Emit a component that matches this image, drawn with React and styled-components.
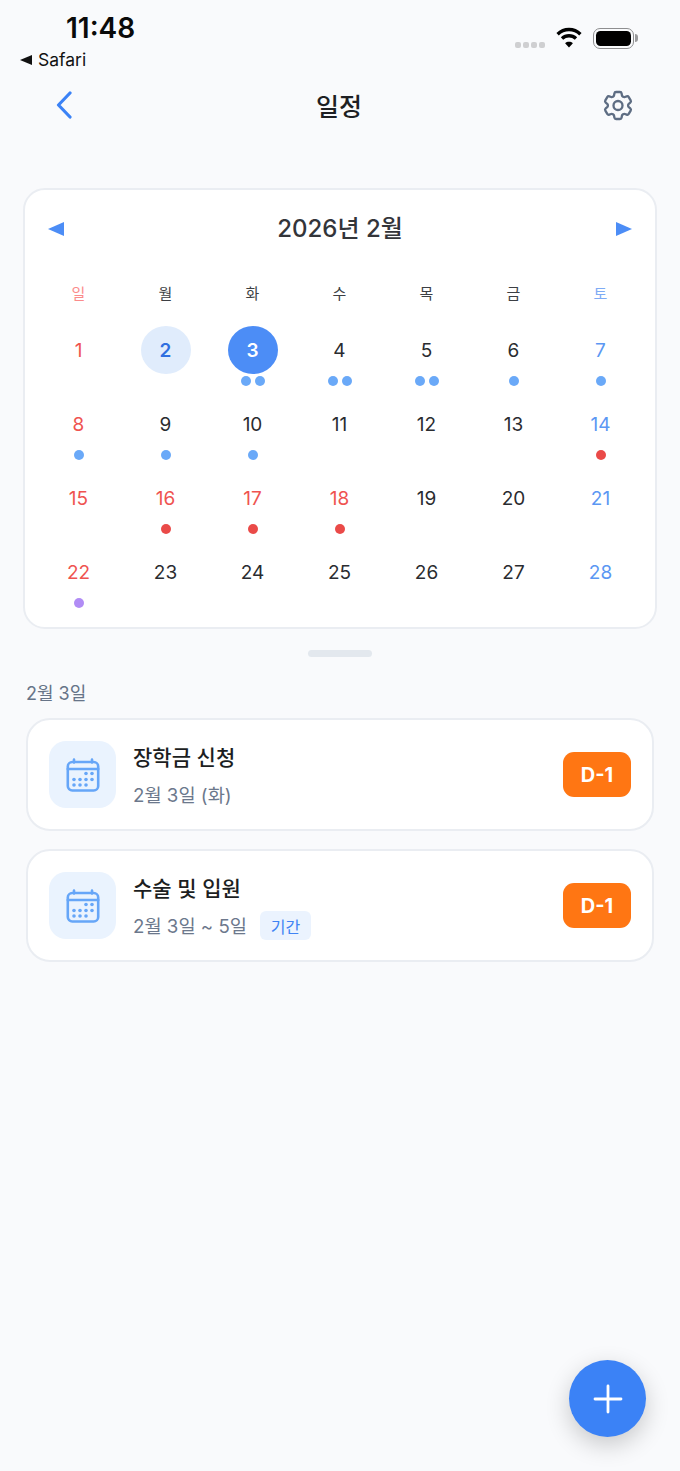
import React from "react";
import styled, { createGlobalStyle } from "styled-components";

const Global = createGlobalStyle`
  html, body { margin: 0; padding: 0; background: #f9fafc; }
  body { font-family: Inter, "Noto Sans CJK KR", "Noto Sans", sans-serif; color: #1f2024; }
  * { box-sizing: border-box; }
`;

const Page = styled.div`
  position: relative;
  width: 680px;
  height: 1471px;
  overflow: hidden;
  background: #f9fafc;
  display: flex;
  flex-direction: column;
`;

const StatusBar = styled.div`
  height: 80px;
  display: flex;
  justify-content: space-between;
  padding: 12px 46px 0 20px;
`;
const StatusLeft = styled.div`
  display: flex;
  flex-direction: column;
`;
const Time = styled.div`
  margin-left: 46px;
  font-size: 28px;
  line-height: 32px;
  font-weight: 600;
  color: #0a0a0a;
`;
const BackToSafari = styled.div`
  display: flex;
  align-items: center;
  gap: 6px;
  margin-top: 6px;
  font-size: 17.5px;
  line-height: 20px;
  color: #111;
`;
const SmallTriangle = styled.span`
  width: 0;
  height: 0;
  border-top: 5.5px solid transparent;
  border-bottom: 5.5px solid transparent;
  border-right: 12px solid #111;
`;
const StatusRight = styled.div`
  display: flex;
  align-items: flex-start;
  padding-top: 15px;
`;
const SignalDots = styled.div`
  display: flex;
  gap: 2px;
  margin: 15px 11px 0 0;
`;
const SignalDot = styled.span`
  width: 6px;
  height: 6px;
  border-radius: 2px;
  background: #cfcfd1;
`;
const Battery = styled.div`
  position: relative;
  width: 41px;
  height: 21px;
  margin: 1px 0 0 11px;
  padding: 2px;
  border: 1.5px solid #8e8e90;
  border-radius: 7px;
`;
const BatteryFill = styled.div`
  height: 100%;
  background: #000;
  border-radius: 4.5px;
`;
const BatteryCap = styled.span`
  position: absolute;
  right: -5px;
  top: 5px;
  width: 3px;
  height: 8px;
  border-radius: 0 3px 3px 0;
  background: #9a9a9c;
`;

const Header = styled.header`
  height: 50px;
  display: flex;
  align-items: center;
  justify-content: space-between;
  padding: 0 44px 0 52px;
`;
const HeaderTitle = styled.h1`
  margin: 0 0 0 2px;
  font-size: 25px;
  font-weight: 500;
  color: #1d1f23;
`;
const IconButton = styled.div`
  display: flex;
  width: ${(p) => p.$w}px;
  justify-content: center;
`;

const CalendarCard = styled.section`
  margin: 58px 23px 0;
  height: 441px;
  padding: 0 10px;
  background: #fff;
  border: 2px solid #eaedf2;
  border-radius: 22px;
`;
const MonthBar = styled.div`
  height: 78px;
  display: flex;
  align-items: center;
  justify-content: space-between;
  padding: 0 13px;
`;
const MonthTitle = styled.div`
  font-size: 24px;
  line-height: 32px;
  font-weight: 500;
  color: #33353a;
`;
const Arrow = styled.span`
  width: 0;
  height: 0;
  border-top: 7.5px solid transparent;
  border-bottom: 7.5px solid transparent;
  ${(p) => (p.$right ? "border-left" : "border-right")}: 16px solid #4c8df6;
`;
const WeekRow = styled.div`
  display: grid;
  grid-template-columns: repeat(7, 87px);
  height: 56px;
  align-items: center;
  margin-top: -4px;
`;
const WeekDay = styled.div`
  text-align: center;
  font-size: 15px;
  color: ${(p) => p.$color};
`;
const DayGrid = styled.div`
  display: grid;
  grid-template-columns: repeat(7, 87px);
  grid-auto-rows: 74px;
  margin-top: 6px;
`;
const DayCell = styled.div`
  display: flex;
  flex-direction: column;
  align-items: center;
`;
const DayNumber = styled.div`
  width: 50px;
  height: 48px;
  border-radius: 50%;
  display: flex;
  align-items: center;
  justify-content: center;
  font-size: 19px;
  font-weight: ${(p) => (p.$state ? 600 : 400)};
  background: ${(p) => (p.$state === "selected" ? "#4c8df6" : p.$state === "today" ? "#e0ecfc" : "transparent")};
  color: ${(p) => p.$color};
`;
const Dots = styled.div`
  display: flex;
  gap: 4px;
  margin-top: 2px;
`;
const Dot = styled.span`
  width: 10px;
  height: 10px;
  border-radius: 50%;
  background: ${(p) => p.$color};
`;

const Handle = styled.div`
  width: 64px;
  height: 7px;
  border-radius: 4px;
  margin: 21px auto 0;
  background: #e3e8ee;
`;
const DateLabel = styled.div`
  margin: 25px 26px 0;
  font-size: 18px;
  line-height: 24px;
  font-weight: 400;
  color: #677488;
`;
const EventList = styled.div`
  display: flex;
  flex-direction: column;
  gap: 18px;
  margin: 12px 26px 0;
`;
const EventCard = styled.article`
  height: 113px;
  display: flex;
  align-items: center;
  padding: 0 21px;
  background: #fff;
  border: 2px solid #eaedf2;
  border-radius: 24px;
`;
const EventIcon = styled.div`
  width: 67px;
  height: 67px;
  flex: none;
  display: flex;
  align-items: center;
  justify-content: center;
  border-radius: 17px;
  background: #eaf3fe;
`;
const EventBody = styled.div`
  flex: 1;
  margin-left: 17px;
  padding-top: 2px;
`;
const EventTitle = styled.div`
  font-size: 21px;
  line-height: 30px;
  font-weight: 500;
  color: #1c1e22;
`;
const EventMeta = styled.div`
  display: flex;
  align-items: center;
  gap: 13px;
  margin-top: 6px;
  height: 30px;
  font-size: 18.7px;
  color: #6c788c;
`;
const Tag = styled.span`
  width: 51px;
  height: 29px;
  display: flex;
  align-items: center;
  justify-content: center;
  margin-top: 2px;
  border-radius: 6px;
  background: #ebf3fe;
  color: #3f83f4;
  font-size: 16px;
`;
const DBadge = styled.div`
  width: 68px;
  height: 45px;
  display: flex;
  align-items: center;
  justify-content: center;
  border-radius: 11px;
  background: #ff7613;
  color: #fff;
  font-size: 20px;
  font-weight: 700;
`;
const Fab = styled.button`
  position: absolute;
  left: 569px;
  top: 1360px;
  width: 77px;
  height: 77px;
  padding: 0;
  border: 0;
  border-radius: 50%;
  display: flex;
  align-items: center;
  justify-content: center;
  background: #3b82f6;
  box-shadow: 0 8px 24px rgba(0, 0, 0, 0.2);
`;

const RED = "#ef5350";
const BLUE = "#5b97f3";
const INK = "#2a2c30";
const DOT_BLUE = "#6aa9f8";
const DOT_RED = "#ea4a48";
const DOT_PURPLE = "#b18cf5";

const week = [
  ["일", "#fb8b8b"],
  ["월", "#3c3f44"],
  ["화", "#3c3f44"],
  ["수", "#3c3f44"],
  ["목", "#3c3f44"],
  ["금", "#3c3f44"],
  ["토", "#7eabf5"],
];

const dayDots = {
  3: [DOT_BLUE, DOT_BLUE],
  4: [DOT_BLUE, DOT_BLUE],
  5: [DOT_BLUE, DOT_BLUE],
  6: [DOT_BLUE],
  7: [DOT_BLUE],
  8: [DOT_BLUE],
  9: [DOT_BLUE],
  10: [DOT_BLUE],
  14: [DOT_RED],
  16: [DOT_RED],
  17: [DOT_RED],
  18: [DOT_RED],
  22: [DOT_PURPLE],
};
const redDays = new Set([1, 8, 15, 16, 17, 18, 22]);

function dayColor(d) {
  if (d === 3) return "#fff";
  if (d === 2) return "#2f6fe0";
  if (redDays.has(d)) return RED;
  if (d % 7 === 0) return BLUE;
  return INK;
}

const CalendarIcon = () => (
  <svg width="34" height="34" viewBox="0 0 34 34" fill="none" stroke="#66a6f8" strokeWidth="2.6" strokeLinecap="round">
    <rect x="1.8" y="4" width="30.4" height="28.5" rx="4.5" />
    <path d="M1.8 11h30.4M8 1.5v3M26 1.5v3" />
    <g fill="#66a6f8" stroke="none">
      {[[20, 15.5], [26, 15.5], [8, 21.5], [14, 21.5], [20, 21.5], [26, 21.5], [8, 27], [14, 27], [20, 27]].map(([x, y]) => (
        <circle key={`${x}-${y}`} cx={x} cy={y} r="1.8" />
      ))}
    </g>
  </svg>
);

const Wifi = () => (
  <svg width="26" height="21" viewBox="0 0 26 21" fill="none" stroke="#000" strokeWidth="3.4" strokeLinecap="butt">
    <path d="M1.6 7.2C8 1 18 1 24.4 7.2" />
    <path d="M6 11.6c4-3.8 10-3.8 14 0" />
    <path d="M13 20.5l-3.9-4.3c2.2-1.9 5.6-1.9 7.8 0z" fill="#000" stroke="none" />
  </svg>
);

const Gear = () => (
  <svg width="37" height="37" viewBox="0 0 24 24" fill="none" stroke="#5e6d83" strokeWidth="1.55" strokeLinecap="round" strokeLinejoin="round">
    <path d="M9.594 3.94c.09-.542.56-.94 1.11-.94h2.593c.55 0 1.02.398 1.11.94l.213 1.281c.063.374.313.686.645.87.074.04.147.083.22.127.325.196.72.257 1.075.124l1.217-.456a1.125 1.125 0 0 1 1.37.49l1.296 2.247a1.125 1.125 0 0 1-.26 1.431l-1.003.827c-.293.241-.438.613-.43.992a7.723 7.723 0 0 1 0 .255c-.008.378.137.75.43.991l1.004.827c.424.35.534.955.26 1.43l-1.298 2.247a1.125 1.125 0 0 1-1.369.491l-1.217-.456c-.355-.133-.75-.072-1.076.124a6.47 6.47 0 0 1-.22.128c-.331.183-.581.495-.644.869l-.213 1.281c-.09.543-.56.94-1.11.94h-2.594c-.55 0-1.019-.398-1.11-.94l-.213-1.281c-.062-.374-.312-.686-.644-.87a6.52 6.52 0 0 1-.22-.127c-.325-.196-.72-.257-1.076-.124l-1.217.456a1.125 1.125 0 0 1-1.369-.49l-1.297-2.247a1.125 1.125 0 0 1 .26-1.431l1.004-.827c.292-.24.437-.613.43-.991a6.932 6.932 0 0 1 0-.255c.007-.38-.138-.751-.43-.992l-1.004-.827a1.125 1.125 0 0 1-.26-1.43l1.297-2.247a1.125 1.125 0 0 1 1.37-.491l1.216.456c.356.133.751.072 1.076-.124.072-.044.146-.086.22-.128.332-.183.582-.495.644-.869l.214-1.28Z" />
    <path d="M15 12a3 3 0 1 1-6 0 3 3 0 0 1 6 0Z" />
  </svg>
);

export default function App() {
  const days = Array.from({ length: 28 }, (_, i) => i + 1);
  return (
    <Page>
      <Global />
      <StatusBar>
        <StatusLeft>
          <Time>11:48</Time>
          <BackToSafari>
            <SmallTriangle />
            Safari
          </BackToSafari>
        </StatusLeft>
        <StatusRight>
          <SignalDots>
            {[0, 1, 2, 3].map((i) => (
              <SignalDot key={i} />
            ))}
          </SignalDots>
          <Wifi />
          <Battery>
            <BatteryFill />
            <BatteryCap />
          </Battery>
        </StatusRight>
      </StatusBar>

      <Header>
        <IconButton $w={24}>
          <svg width="20" height="28" viewBox="0 0 20 28" fill="none" stroke="#3b82f6" strokeWidth="3.2" strokeLinecap="round" strokeLinejoin="round">
            <path d="M16 2L4.5 14 16 26" />
          </svg>
        </IconButton>
        <HeaderTitle>일정</HeaderTitle>
        <IconButton $w={36}>
          <Gear />
        </IconButton>
      </Header>

      <CalendarCard>
        <MonthBar>
          <Arrow />
          <MonthTitle>2026년 2월</MonthTitle>
          <Arrow $right />
        </MonthBar>
        <WeekRow>
          {week.map(([label, color]) => (
            <WeekDay key={label} $color={color}>
              {label}
            </WeekDay>
          ))}
        </WeekRow>
        <DayGrid>
          {days.map((d) => (
            <DayCell key={d}>
              <DayNumber $color={dayColor(d)} $state={d === 3 ? "selected" : d === 2 ? "today" : undefined}>
                {d}
              </DayNumber>
              <Dots>
                {(dayDots[d] || []).map((c, i) => (
                  <Dot key={i} $color={c} />
                ))}
              </Dots>
            </DayCell>
          ))}
        </DayGrid>
      </CalendarCard>

      <Handle />
      <DateLabel>2월 3일</DateLabel>

      <EventList>
        <EventCard>
          <EventIcon>
            <CalendarIcon />
          </EventIcon>
          <EventBody>
            <EventTitle>장학금 신청</EventTitle>
            <EventMeta>2월 3일 (화)</EventMeta>
          </EventBody>
          <DBadge>D-1</DBadge>
        </EventCard>
        <EventCard>
          <EventIcon>
            <CalendarIcon />
          </EventIcon>
          <EventBody>
            <EventTitle>수술 및 입원</EventTitle>
            <EventMeta>
              2월 3일 ~ 5일
              <Tag>기간</Tag>
            </EventMeta>
          </EventBody>
          <DBadge>D-1</DBadge>
        </EventCard>
      </EventList>

      <Fab aria-label="추가">
        <svg width="30" height="30" viewBox="0 0 30 30" fill="none" stroke="#fff" strokeWidth="2.8" strokeLinecap="round">
          <path d="M15 2v26M2 15h26" />
        </svg>
      </Fab>
    </Page>
  );
}
